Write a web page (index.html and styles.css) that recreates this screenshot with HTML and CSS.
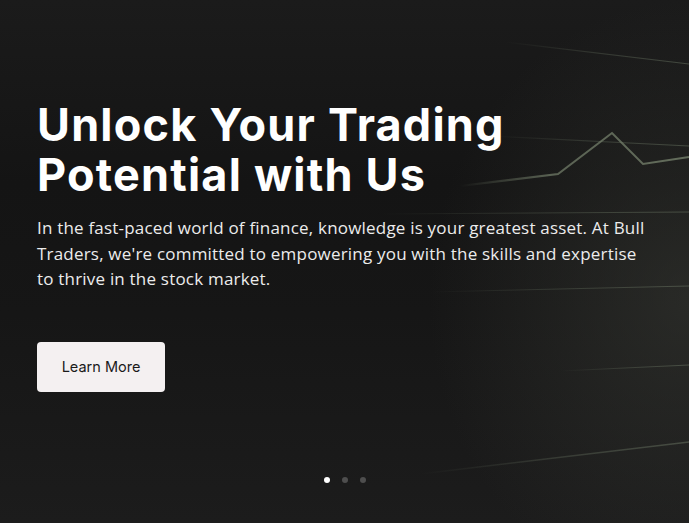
FILE: index.html
```html
<!DOCTYPE html>
<html lang="en">
<head>
<meta charset="utf-8">
<title>Bull Traders</title>
<link rel="stylesheet" href="styles.css">
</head>
<body>
<section class="hero">
  <svg class="hero-bg" width="689" height="523" viewBox="0 0 689 523" aria-hidden="true">
    <defs>
      <linearGradient id="fadeL" x1="0" x2="1" y1="0" y2="0">
        <stop offset="0" stop-color="#8a9a80" stop-opacity="0"/>
        <stop offset="0.5" stop-color="#8a9a80" stop-opacity="0.22"/>
        <stop offset="1" stop-color="#8a9a80" stop-opacity="0.35"/>
      </linearGradient>
      <linearGradient id="chartG" x1="0" x2="1" y1="0" y2="0">
        <stop offset="0" stop-color="#6f7a66" stop-opacity="0"/>
        <stop offset="0.4" stop-color="#6f7a66" stop-opacity="0.75"/>
        <stop offset="1" stop-color="#6f7a66" stop-opacity="0.85"/>
      </linearGradient>
    </defs>
    <line x1="505" y1="42" x2="689" y2="64" stroke="url(#fadeL)" stroke-width="1.2"/>
    <line x1="490" y1="136" x2="689" y2="146" stroke="url(#fadeL)" stroke-width="1.2"/>
    <line x1="380" y1="214" x2="689" y2="212" stroke="url(#fadeL)" stroke-width="1"/>
    <line x1="430" y1="292" x2="689" y2="286" stroke="url(#fadeL)" stroke-width="1"/>
    <line x1="560" y1="371" x2="689" y2="365" stroke="url(#fadeL)" stroke-width="1"/>
    <line x1="420" y1="474" x2="689" y2="442" stroke="url(#fadeL)" stroke-width="1.4"/>
    <polyline points="460,186 558,174 612,133 643,164 689,157" fill="none" stroke="url(#chartG)" stroke-width="2"/>
  </svg>
  <div class="hero-content">
    <h1 class="hero-title">Unlock Your Trading<br>Potential with Us</h1>
    <p class="hero-text">In the fast-paced world of finance, knowledge is your greatest asset. At Bull Traders, we're committed to empowering you with the skills and expertise to thrive in the stock market.</p>
    <a class="hero-btn" href="#">Learn More</a>
  </div>
  <div class="dots">
    <span class="dot active"></span>
    <span class="dot"></span>
    <span class="dot"></span>
  </div>
</section>
</body>
</html>
```
FILE: styles.css
```css
* { box-sizing: border-box; }
html, body { margin: 0; padding: 0; }
body {
  background: #161616;
  font-family: "Open Sans", "Liberation Sans", sans-serif;
}
.hero {
  position: relative;
  width: 689px;
  height: 523px;
  overflow: hidden;
  display: flex;
  flex-direction: column;
  padding: 100px 37px 0;
  background:
    radial-gradient(ellipse 260px 300px at 689px 300px, rgba(60,62,56,0.5), rgba(30,30,30,0) 100%),
    linear-gradient(180deg, #1b1b1b 0%, #141414 35%, #161616 60%, #1c1c1c 100%);
}
.hero-bg {
  position: absolute;
  left: 0;
  top: 0;
  pointer-events: none;
}
.hero-content {
  position: relative;
  display: flex;
  flex-direction: column;
  align-items: flex-start;
}
.hero-title {
  margin: 0;
  color: #ffffff;
  font-family: "Inter", "Liberation Sans", sans-serif;
  font-weight: 700;
  font-size: 45px;
  line-height: 50px;
  letter-spacing: 1.2px;
}
.hero-text {
  margin: 15px 0 0;
  color: #ececec;
  font-size: 17px;
  line-height: 25.5px;
  letter-spacing: 0.2px;
  max-width: 620px;
}
.hero-btn {
  margin-top: 50px;
  display: inline-flex;
  align-items: center;
  justify-content: center;
  width: 128px;
  height: 50px;
  background: #f4f0f1;
  border-radius: 4px;
  color: #1a1a1a;
  text-decoration: none;
  font-family: "Inter", "Liberation Sans", sans-serif;
  font-size: 14.5px;
}
.dots {
  position: relative;
  margin-top: auto;
  margin-bottom: 40px;
  display: flex;
  justify-content: center;
  gap: 12px;
}
.dot {
  width: 6px;
  height: 6px;
  border-radius: 50%;
  background: #4e4e4e;
}
.dot.active { background: #ffffff; }
```
